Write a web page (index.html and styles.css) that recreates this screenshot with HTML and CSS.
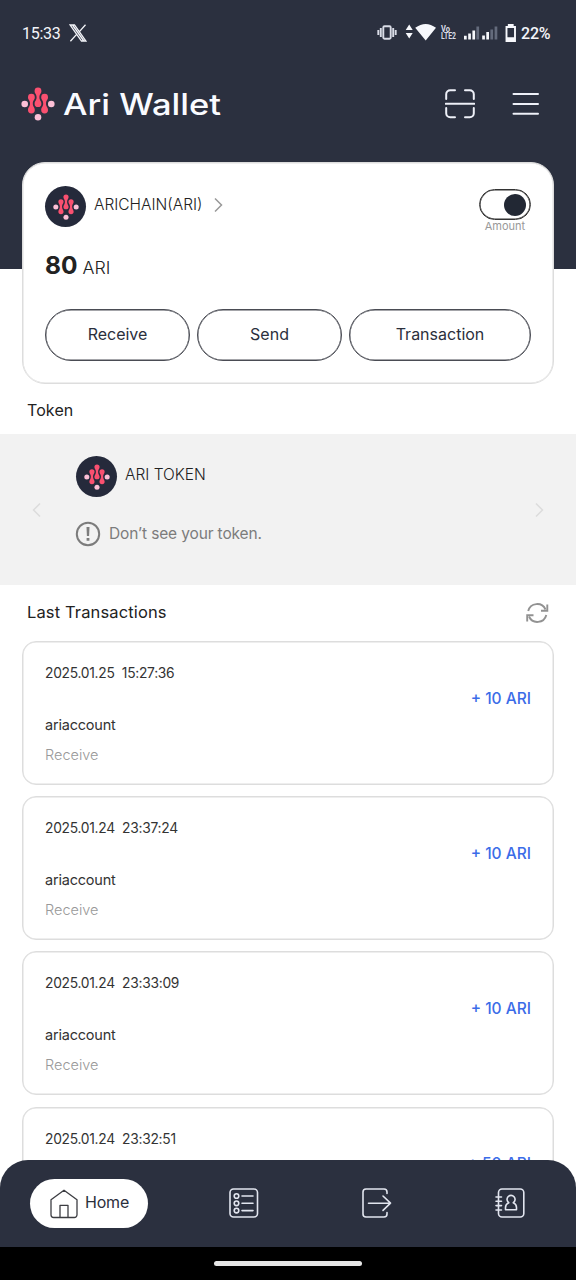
FILE: index.html
```html
<!DOCTYPE html>
<html lang="en">
<head>
<meta charset="utf-8">
<title>Ari Wallet</title>
<link rel="stylesheet" href="styles.css">
</head>
<body>
<svg class="defs" aria-hidden="true">
  <symbol id="mark" viewBox="0 0 34 34">
    <g fill="#fa5070">
      <path id="link" d="M13.600 3.900a3.400 3.400 0 1 1 6.800 0c0 2.700-2 2.900-2 6.400s2 3.700 2 6.400a3.400 3.400 0 1 1-6.800 0c0-2.700 2-2.900 2-6.400s-2-3.700-2-6.400z"/>
      <use href="#link" x="-6.600" y="6.300"/>
      <use href="#link" x="6.600" y="6.300"/>
    </g>
    <g fill="#fcbfd6">
      <circle cx="3.700" cy="17" r="3.300"/><circle cx="30.300" cy="17" r="3.300"/><circle cx="17" cy="30.300" r="3.300"/>
    </g>
  </symbol>
</svg>
<div class="app">
  <div class="screen">
    <header class="hero">
      <div class="status">
        <span class="clock">15:33</span>
        <svg class="x-logo" width="18" height="18" viewBox="0 0 18 18"><path d="M1.200 1h4.300l11.300 16h-4.300zM3.800 1.500 14.500 16.500M16.500.800 10.400 7.600M7.600 10.400 1.400 17.200" fill="none" stroke="#f4f5fa" stroke-width="1.300"/></svg>
        <svg class="status-icons" width="142" height="22" viewBox="0 0 142 22">
          <g fill="none" stroke="#d9dce6" stroke-width="1.900">
            <rect x="7.300" y="4.300" width="7.400" height="12.500" rx="1.200"/>
            <path d="M4.800 6v9M17.200 6v9M2.300 8v5M19.700 8v5"/>
          </g>
          <g fill="#f7f8fc">
            <path d="M33.200 2.500l3.500 5.500h-7zM33.200 16.500l3.500-5.500h-7zM49.700 18.600 39.200 5.800q10.500-7.800 20.800 0z"/>
            <path d="M88 13.700h2.700v3.800H88zM92.200 11.500h2.700v6h-2.700zM96.400 8.500h2.700v9h-2.700zM106.200 13.500h2.700v4h-2.700zM110.300 10h2.700v7.500h-2.700z"/>
          </g>
          <path d="M100.400 4.500h2.700v13h-2.700zM114.400 7.500h2.700v10h-2.700zM118.600 4.500h2.700v13h-2.700z" fill="#646b7c"/>
          <text class="volte" x="65" y="10" textLength="9" lengthAdjust="spacingAndGlyphs">Vo</text>
          <text class="volte" x="65" y="17" textLength="15" lengthAdjust="spacingAndGlyphs">LTE2</text>
          <path d="M130.500 5h2.300V3h3.900v2h2.300v14h-8.500z" fill="none" stroke="#f7f8fc" stroke-width="1.900"/>
          <path d="M130 15.300h9v3.500h-9zM132 2.500h5V6h-5z" fill="#f7f8fc"/>
        </svg>
        <span class="percent">22%</span>
      </div>
      <div class="brand">
        <svg width="34" height="34"><use href="#mark"/></svg>
        <svg class="brand-name" width="162" height="42"><text x="0" y="31.500" textLength="158" lengthAdjust="spacingAndGlyphs">Ari Wallet</text></svg>
        <svg class="scan" width="30" height="30" viewBox="0 0 30 30"><path d="M1.200 10V5.200a4 4 0 0 1 4-4H10M20 1.200h4.800a4 4 0 0 1 4 4V10M28.800 19v5.300a4 4 0 0 1-4 4H20M10 28.300H5.200a4 4 0 0 1-4-4V19M.7 14.800h28.600"/></svg>
        <svg class="menu" width="28" height="24" viewBox="0 0 28 24"><path d="M1.500 2h24.500M1.500 11.900h24.500M1.500 21.800h24.500"/></svg>
      </div>
    </header>

    <section class="card">
      <div class="account">
        <span class="coin"><svg width="26" height="26"><use href="#mark"/></svg></span>
        <span class="account-name">ARICHAIN(ARI)</span>
        <svg class="chevron" width="9" height="16" viewBox="0 0 9 16"><path d="M1 1.500 7.500 8 1 14.500"/></svg>
        <div class="toggle-box">
          <span class="toggle"><i class="knob"></i></span>
          <span class="toggle-label">Amount</span>
        </div>
      </div>
      <div class="balance"><b>80</b><span>ARI</span></div>
      <div class="actions">
        <span class="pill">Receive</span>
        <span class="pill">Send</span>
        <span class="pill">Transaction</span>
      </div>
    </section>

    <h2 class="title token-title"><span>Token</span></h2>
    <section class="tokens">
      <svg class="arrow" width="9" height="16" viewBox="0 0 9 16"><path d="M8 1.500 1.500 8 8 14.500"/></svg>
      <div class="token-list">
        <div class="token">
          <span class="coin"><svg width="26" height="26"><use href="#mark"/></svg></span>
          <span class="token-name">ARI TOKEN</span>
        </div>
        <div class="hint">
          <svg width="26" height="26" viewBox="0 0 26 26"><circle cx="13" cy="13" r="11.200" fill="none" stroke="#7c7c7c" stroke-width="2"/><path d="M11.500 6h3l-.4 9h-2.200zM11.600 17h2.800v2.800h-2.800z" fill="#7c7c7c"/></svg>
          <span>Don’t see your token.</span>
        </div>
      </div>
      <svg class="arrow" width="9" height="16" viewBox="0 0 9 16"><path d="M1 1.500 7.500 8 1 14.500"/></svg>
    </section>

    <h2 class="title last-title"><span>Last Transactions</span>
      <svg width="24" height="20" viewBox="0 0 24 20"><g fill="none" stroke="#929292" stroke-width="1.900"><path d="M3.200 8A9.200 9.200 0 0 1 20.500 6.500M21.300 12A9.200 9.200 0 0 1 4 13.500"/><path d="M22.300 1.500v6.300h-6.300M2.200 18.500v-6.300h6.300"/></g></svg>
    </h2>
    <section class="history">
      <article class="tx"><time>2025.01.25&nbsp; 15:27:36</time><span class="amount">+ 10 ARI</span><span class="who">ariaccount</span><span class="kind">Receive</span></article>
      <article class="tx"><time>2025.01.24&nbsp; 23:37:24</time><span class="amount">+ 10 ARI</span><span class="who">ariaccount</span><span class="kind">Receive</span></article>
      <article class="tx"><time>2025.01.24&nbsp; 23:33:09</time><span class="amount">+ 10 ARI</span><span class="who">ariaccount</span><span class="kind">Receive</span></article>
      <article class="tx"><time>2025.01.24&nbsp; 23:32:51</time><span class="amount">+ 50 ARI</span></article>
    </section>
  </div>

  <nav class="tabs">
    <span class="tab home">
      <svg width="28" height="30" viewBox="0 0 28 30"><path d="M1 10.800 14 1.200l13 9.600v15a2.700 2.700 0 0 1-2.700 2.700H3.700A2.700 2.700 0 0 1 1 25.800zM10 28.500V16.300h8v12.200"/></svg>
      <span class="home-label">Home</span>
    </span>
    <svg class="tab" width="30" height="30" viewBox="0 0 30 30"><rect x="1" y="1" width="27.500" height="28" rx="3.500"/><circle cx="7.500" cy="8" r="2.300"/><circle cx="7.500" cy="15.300" r="2.300"/><circle cx="7.500" cy="22.600" r="2.300"/><path d="M13 8h11M13 15.300h11M13 22.600h11"/></svg>
    <svg class="tab" width="30" height="30" viewBox="0 0 30 30"><path d="M25 5.500V4a3 3 0 0 0-3-3H4a3 3 0 0 0-3 3v22a3 3 0 0 0 3 3h18a3 3 0 0 0 3-3v-1.500M6.500 15.200h22M21 8l7.500 7.200L21 22.400"/></svg>
    <svg class="tab" width="30" height="30" viewBox="0 0 30 30"><rect x="3.500" y="1" width="25.300" height="28" rx="3.500"/><path d="M1 9h5.500M1 13.300h5.500M1 17.600h5.500M1 22h5.500M10.500 21.800v-2.300q0-3.500 3.300-4.800a4 4 0 1 1 4.500 0q3.200 1.300 3.200 4.800v2.300z"/></svg>
  </nav>
  <footer class="system-bar"><i class="handle"></i></footer>
</div>
</body>
</html>
```
FILE: styles.css
```css
* { box-sizing: border-box; }
body { margin: 0; font-family: Inter, "Liberation Sans", sans-serif; color: #222; }
svg { display: block; flex: none; }
.defs { position: absolute; width: 0; height: 0; }
.app { width: 576px; height: 1280px; display: flex; flex-direction: column; overflow: hidden; background: #fff; }
.screen { height: 1188px; flex: none; overflow: hidden; }

.hero { height: 269px; background: #2b303f; color: #f4f5fa; }
.status { height: 66px; padding: 0 25px 0 22px; display: flex; align-items: center; font-family: Roboto, sans-serif; font-size: 16px; font-weight: 500; }
.clock { width: 39px; letter-spacing: -.3px; font-weight: 400; }
.x-logo { margin-left: 8px; }
.status-icons { margin-left: auto; }
.volte { font: 700 8.500px Roboto, sans-serif; fill: #d9dce6; }
.percent { width: 30px; margin-left: 3px; letter-spacing: -.2px; white-space: nowrap; }
.brand { height: 75px; padding: 0 36px 0 21px; display: flex; align-items: center; }
.brand-name { margin-left: 8px; }
.brand-name text { font: 500 29.5px Inter, sans-serif; fill: #fafbff; }
.scan { margin-left: auto; }
.menu { margin-left: 37px; }
.scan, .menu { fill: none; stroke: #eef0f8; stroke-width: 2; stroke-linecap: round; }

.card { position: relative; height: 222px; margin: -107px 22px 0; padding: 26px 22px 0; border: 1px solid #ddd; box-shadow: inset 0 0 0 .5px #ddd; border-radius: 23px; background: #fff; }
.account { display: flex; align-items: flex-start; height: 59px; }
.coin { width: 41px; height: 41px; margin-top: -3px; border-radius: 50%; background: #252a3b; display: flex; align-items: center; justify-content: center; flex: none; }
.account-name { margin: 6px 0 0 8px; font-size: 15.500px; line-height: 20px; font-weight: 300; }
.chevron { margin: 8px 0 0 11px; }
.chevron path, .arrow path { fill: none; stroke: #999; stroke-width: 1.500; }
.toggle-box { margin-left: auto; display: flex; flex-direction: column; align-items: center; }
.toggle { width: 52px; height: 31px; padding-right: 4px; border: 1px solid #333; box-shadow: inset 0 0 0 .6px #333; border-radius: 16px; display: flex; align-items: center; justify-content: flex-end; }
.knob { width: 22px; height: 22px; border-radius: 50%; background: #222834; }
.toggle-label { font-size: 11px; line-height: 13px; color: #999; }
.balance { height: 34px; display: flex; align-items: baseline; gap: 5px; line-height: 34px; }
.balance b { font-size: 24.500px; font-weight: 700; }
.balance span { font-size: 17.800px; font-weight: 300; }
.actions { margin-top: 27px; display: grid; grid-template-columns: 145px 145px 182px; gap: 7px; }
.pill { height: 52px; border: 1px solid #4a4c54; box-shadow: inset 0 0 0 .4px #4a4c54; border-radius: 26px; font-size: 16px; line-height: 48px; text-align: center; color: #2b2f3c; }

.title { margin: 0; padding: 0 27px; display: flex; align-items: center; justify-content: space-between; font-size: 16px; font-weight: 400; }
.token-title { height: 50px; padding-top: 2px; letter-spacing: .1px; }
.tokens { height: 151px; padding: 0 32px; background: #f2f2f2; display: flex; align-items: center; }
.token-list { flex: 1; height: 151px; padding: 25px 0 0 35px; }
.arrow path { stroke: #dcdcdc; }
.token { height: 62px; display: flex; }
.token-name { margin-left: 8px; font-size: 15.500px; line-height: 32px; font-weight: 300; }
.hint { display: flex; align-items: center; gap: 8px; margin-left: -1px; font-size: 15.500px; letter-spacing: -.14px; color: #7c7c7c; }
.hint span { padding-bottom: 1px; }
.last-title { height: 56px; padding-right: 27px; font-size: 16.500px; letter-spacing: .13px; }
.last-title span { padding-bottom: 2px; }

.history { margin: 0 22px; display: grid; gap: 11.200px; }
.tx { height: 144px; padding: 20px 22px 0; border: 1px solid #ddd; box-shadow: inset 0 0 0 .5px #ddd; border-radius: 14px; display: grid; grid-template-rows: 22px 28px 25px 34px; font-size: 14.500px; align-items: center; }
.tx time { color: #333; font-size: 13.800px; letter-spacing: -.27px; }
.amount { justify-self: end; font-size: 15.500px; color: #3b6ce8; font-weight: 500; }
.who { color: #333; letter-spacing: -.2px; }
.kind { color: #999; font-weight: 300; }

.tabs { position: relative; height: 87px; margin-top: -28px; padding: 0 51px 0 30px; flex: none; background: #2b303f; border-radius: 28px 28px 0 0; display: flex; align-items: center; }
.tab { fill: none; stroke: #e2e5ef; stroke-width: 1.600; stroke-linecap: round; stroke-linejoin: round; margin: -1px 0 0 103px; }
.tabs .tab:nth-child(2) { margin-left: 81px; }
.tabs .home { flex: none; width: 118px; height: 49px; margin: 0; padding-left: 20px; border-radius: 25px; background: #fff; display: flex; align-items: center; gap: 7px; font-size: 16px; line-height: 20px; stroke: #3c3d42; stroke-width: 1.300; color: #2b2f3c; }
.home-label { padding-bottom: 3px; letter-spacing: -.2px; }
.system-bar { height: 33px; flex: none; background: #000; display: flex; align-items: center; justify-content: center; }
.handle { width: 148px; height: 5.500px; border-radius: 3px; background: #e6e6e6; }
```
